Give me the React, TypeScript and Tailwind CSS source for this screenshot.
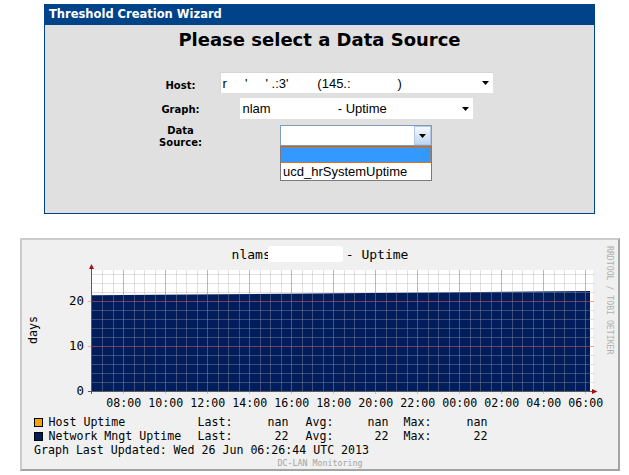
import React from 'react';

const Caret: React.FC = () => (
    <svg width="7" height="4" viewBox="0 0 7 4" className="block">
        <path d="M0 0h7L3.5 4z" fill="#000" />
    </svg>
);

const WizardBox: React.FC = () => (
    <div className="ml-[44px] w-[551px] h-[210px] border border-[#004389] bg-[#e0e0e0]">
        <div className="h-[20px] bg-[#004389] pl-[4px] flex items-center text-white font-bold text-[11.5px] font-['DejaVu_Sans',Verdana,sans-serif]">
            Threshold Creation Wizard
        </div>
        <h1 className="mt-[4px] text-center text-[18px] leading-[21px] font-bold text-black font-['DejaVu_Sans',Verdana,sans-serif]">
            Please select a Data Source
        </h1>

        <div className="mt-[22px] ml-[98px] w-[351px] flex flex-col">
            {/* host */}
            <div className="flex h-[21px]">
                <div className="w-[75px] pt-[8px] text-center text-[10px] leading-[12px] font-bold font-['DejaVu_Sans',Verdana,sans-serif]">Host:</div>
                <div className="w-[276px] flex justify-center">
                    <div className="w-[273px] h-[21px] bg-white border-t border-l border-[#d6d6d6] flex items-center justify-between pl-[2px] pr-[4px] font-['Liberation_Sans',Arial,sans-serif] text-[13px] leading-[21px] text-black">
                        <span className="whitespace-pre">{"r     '     ' .:3'        (145.:             )"}</span>
                        <Caret />
                    </div>
                </div>
            </div>

            {/* graph */}
            <div className="flex h-[21px] mt-[5px]">
                <div className="w-[75px] pt-[6px] text-center text-[10px] leading-[12px] font-bold font-['DejaVu_Sans',Verdana,sans-serif]">Graph:</div>
                <div className="w-[276px] flex justify-center">
                    <div className="w-[233px] h-[21px] bg-white flex items-center justify-between pl-[3px] pr-[4px] font-['Liberation_Sans',Arial,sans-serif] text-[13px] leading-[21px] text-black">
                        <span className="flex whitespace-pre">
                            <span>nlam</span>
                            <span className="inline-block w-[67px]" />
                            <span>- Uptime</span>
                        </span>
                        <Caret />
                    </div>
                </div>
            </div>

            {/* data source */}
            <div className="flex h-[21px] mt-[6px]">
                <div className="w-[75px] text-center text-[10px] leading-[12px] font-bold font-['DejaVu_Sans',Verdana,sans-serif]">
                    Data<br />Source:
                </div>
                <div className="w-[276px] flex justify-center">
                    <div className="relative w-[152px] h-[21px]">
                        <div className="w-full h-full bg-white border border-[#7f9db9] flex justify-end">
                            <div className="w-[17px] h-full border border-[#b4c8e6] bg-linear-to-b from-[#f6f9fd] to-[#bdd6f1] flex items-center justify-center">
                                <Caret />
                            </div>
                        </div>
                        <div className="absolute left-0 top-full w-full bg-white border border-[#7a7a7a] font-['Liberation_Sans',Arial,sans-serif] text-[13px] text-black">
                            <div className="h-[16px] bg-[#3399ff] border border-dotted border-[#e0701c]" />
                            <div className="h-[17px] leading-[17px] pl-[2px]">ucd_hrSystemUptime</div>
                        </div>
                    </div>
                </div>
            </div>
        </div>
    </div>
);

const HOURS = ['08:00', '10:00', '12:00', '14:00', '16:00', '18:00', '20:00', '22:00', '00:00', '02:00', '04:00', '06:00'];

const PlotSvg: React.FC = () => {
    // plot frame inside the svg: x 69..571, y 8..129, 4.5px per day
    const yv = (v: number) => 129 - 4.5 * v;
    const minorY = Array.from({ length: 13 }, (_, i) => 129 - 9 * (i + 1));
    const minorX = Array.from({ length: 47 }, (_, i) => Math.round(69.8 + 10.5 * (i + 1)));
    const majorX = HOURS.map((_, i) => 101.3 + 42 * i);

    return (
        <svg width="596" height="149" viewBox="0 0 596 149" className="block">
            <rect x="69" y="8" width="502" height="121" fill="#fff" />
            <polygon points="70,129 70,33.3 568,29 568,129" fill="#021d5c" />

            {minorY.map(y => (
                <line key={`my${y}`} x1="70" x2="572" y1={y + 0.5} y2={y + 0.5} stroke="#a8a8a8" strokeOpacity="0.35" />
            ))}
            {minorX.map(x => (
                <line key={`mx${x}`} x1={x + 0.5} x2={x + 0.5} y1="8" y2="129" stroke="#a8a8a8" strokeOpacity="0.35" />
            ))}
            {[10, 20].map(v => (
                <line key={`My${v}`} x1="66" x2="572" y1={yv(v) + 0.5} y2={yv(v) + 0.5} stroke="#ff2020" strokeOpacity="0.33" />
            ))}
            {majorX.map(x => (
                <line key={`Mx${x}`} x1={Math.round(x) + 0.5} x2={Math.round(x) + 0.5} y1="8" y2="132" stroke="#ff2020" strokeOpacity="0.33" />
            ))}

            {/* axes */}
            <line x1="69.5" x2="69.5" y1="132" y2="5" stroke="#5a5a5a" />
            <line x1="66" x2="571" y1="129.5" y2="129.5" stroke="#5a5a5a" />
            <polygon points="67,7 72,7 69.5,2" fill="#a01010" />
            <polygon points="570,127 570,132 575.5,129.5" fill="#a01010" />

            <g fontFamily="'DejaVu Sans Mono', monospace" fontSize="11.6" fill="#000">
                {[0, 10, 20].map(v => (
                    <text key={`yl${v}`} x="62" y={yv(v) + 4} textAnchor="end" fontSize="12.4">{v}</text>
                ))}
                {majorX.map((x, i) => (
                    <text key={`xl${i}`} x={x + 0.5} y="144.7" textAnchor="middle">{HOURS[i]}</text>
                ))}
                <text transform="translate(14.5,68) rotate(-90)" textAnchor="middle">days</text>
            </g>
        </svg>
    );
};

const LegendRow: React.FC<{ swatch: string; name: string; last: string; avg: string; max: string }> = ({ swatch, name, last, avg, max }) => (
    <div className="h-[14px] flex items-center whitespace-pre">
        <span className={`ml-[12px] w-[9px] h-[9px] border border-black ${swatch}`} />
        <span className="ml-[5.5px] w-[149px]">{name}</span>
        <span className="w-[91px] flex justify-between"><span>Last:</span><span>{last}</span></span>
        <span className="ml-[17px] w-[83px] flex justify-between"><span>Avg:</span><span>{avg}</span></span>
        <span className="ml-[15px] w-[84px] flex justify-between"><span>Max:</span><span>{max}</span></span>
    </div>
);

const UptimeGraph: React.FC = () => (
    <div className="relative mt-[24px] ml-[20px] w-[600px] h-[233px] bg-[#f0f0f0] border-2 border-t-[#cbcbcb] border-l-[#cbcbcb] border-b-[#a3a3a3] border-r-[#a3a3a3]">
        <div className="h-[22px] flex justify-center items-end font-['DejaVu_Sans_Mono',monospace] text-[13px] leading-[15px] text-black whitespace-pre">
            <span>nlams</span>
            <span className="inline-block w-[75px] h-[16px] bg-white rounded-[3px] -ml-[3px] mr-[3px]" />
            <span>- Uptime</span>
        </div>

        <PlotSvg />

        <div className="mt-[4px] font-['DejaVu_Sans_Mono',monospace] text-[11.6px] leading-[14px] text-black">
            <LegendRow swatch="bg-[#f4a30c]" name="Host Uptime" last="nan" avg="nan" max="nan" />
            <LegendRow swatch="bg-[#021d5c]" name="Network Mngt Uptime" last="22" avg="22" max="22" />
            <div className="h-[14px] pl-[12px] whitespace-pre">Graph Last Updated: Wed 26 Jun 06:26:44 UTC 2013</div>
        </div>
        <div className="h-[12px] text-center font-['DejaVu_Sans_Mono',monospace] text-[8.3px] leading-[12px] text-[#a4a4a4]">
            DC-LAN Monitoring
        </div>

        <div className="absolute top-[6px] right-[3px] [writing-mode:vertical-rl] font-['DejaVu_Sans_Mono',monospace] text-[8.2px] leading-[10px] text-[#b0b0b0] whitespace-pre">
            RRDTOOL / TOBI OETIKER
        </div>
    </div>
);

export default function App() {
    return (
        <div className="w-[629px] h-[475px] bg-white overflow-hidden pt-[4px]">
            <WizardBox />
            <UptimeGraph />
        </div>
    );
}
